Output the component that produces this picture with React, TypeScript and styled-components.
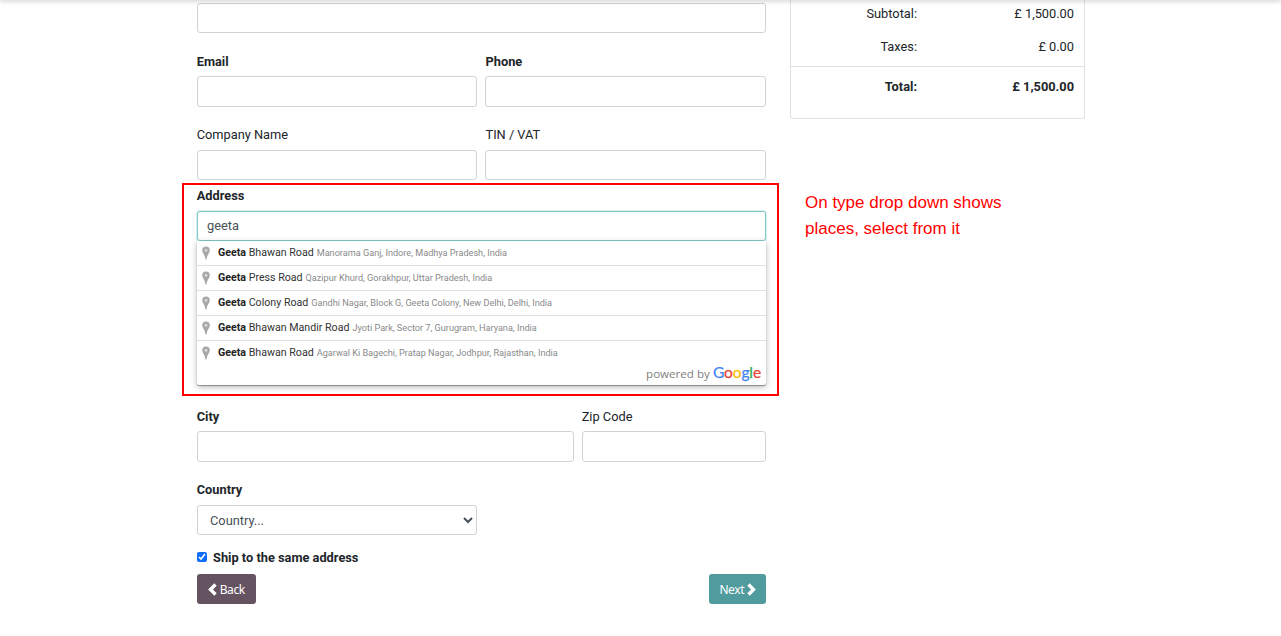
import React from "react";
import styled, { createGlobalStyle } from "styled-components";

const GlobalStyle = createGlobalStyle`
  html, body {
    margin: 0;
    padding: 0;
    background: #fff;
  }
  body {
    font-family: Roboto, "Liberation Sans", sans-serif;
    font-size: 12.8px;
    color: #212529;
    overflow: hidden;
  }
`;

const Page = styled.div`
  position: relative;
  width: 1281px;
  height: 636px;
  overflow: hidden;
  display: flex;
  align-items: flex-start;
  padding-left: 197px;
  box-sizing: border-box;
`;

const TopShadow = styled.div`
  position: absolute;
  top: -4px;
  left: 0;
  right: 0;
  height: 4px;
  box-shadow: 0 1px 5px rgba(0, 0, 0, 0.22);
`;

const Form = styled.div`
  width: 569px;
  padding-top: 3px;
  display: flex;
  flex-direction: column;
`;

const Row = styled.div<{ $columns?: string; $top: number }>`
  display: grid;
  grid-template-columns: ${(p) => p.$columns || "1fr"};
  column-gap: 8px;
  margin-top: ${(p) => p.$top}px;
`;

const Field = styled.div`
  position: relative;
  display: flex;
  flex-direction: column;
`;

const Label = styled.label<{ $bold?: boolean; $low?: boolean; $second?: boolean }>`
  display: block;
  height: 15px;
  line-height: 15px;
  margin-left: ${(p) => (p.$second ? "0.5px" : "-0.3px")};
  padding-top: ${(p) => (p.$low ? 1 : 0)}px;
  margin-bottom: ${(p) => (p.$low ? 7 : 8)}px;
  font-weight: ${(p) => (p.$bold ? 700 : 400)};
  font-size: 12.8px;
`;

const Input = styled.input<{ $height?: number; $focus?: boolean }>`
  box-sizing: border-box;
  width: 100%;
  height: ${(p) => p.$height || 31}px;
  padding: 0 9px ${(p) => (p.$focus ? 2 : 0)}px;
  border: 1px solid ${(p) => (p.$focus ? "#83c7c7" : "#ced4da")};
  border-radius: 3px;
  background: #fff;
  color: #495057;
  font: 400 12.8px Roboto, sans-serif;
  outline: none;
  box-shadow: ${(p) => (p.$focus ? "0 0 0 1px rgba(131,199,199,0.3)" : "none")};
`;

const Select = styled.select`
  box-sizing: border-box;
  width: 280px;
  height: 30px;
  padding: 0 8px;
  border: 1px solid #ced4da;
  border-radius: 3px;
  background: #fff;
  color: #495057;
  font: 400 12.8px Roboto, sans-serif;
`;

const Dropdown = styled.div`
  position: absolute;
  top: 53px;
  left: 0;
  right: 0;
  height: 144px;
  background: #fff;
  border-radius: 0 0 2px 2px;
  box-shadow: 0 1px 1px rgba(0, 0, 0, 0.35), 0 2px 6px rgba(0, 0, 0, 0.28);
  z-index: 2;
`;

const Place = styled.div<{ $first?: boolean }>`
  box-sizing: border-box;
  height: ${(p) => (p.$first ? 24 : 25)}px;
  display: flex;
  align-items: center;
  padding: 0 0 2px 5px;
  border-top: ${(p) => (p.$first ? "0" : "1px solid #e0e0e0")};
  white-space: nowrap;
`;

const Pin = styled.svg`
  width: 8px;
  height: 14px;
  margin: 2px 8px 0 0;
  flex: none;
`;

const Main = styled.span`
  font-size: 10.65px;
  color: #333;
  margin-right: 3px;
`;

const Match = styled.b`
  font-weight: 700;
  color: #222;
`;

const Secondary = styled.span`
  font-size: 9.15px;
  color: #8a8a8a;
  margin-top: 2px;
`;

const PoweredBy = styled.div`
  position: absolute;
  right: 5px;
  bottom: 4px;
  display: flex;
  align-items: baseline;
  gap: 3px;
  font-family: "Open Sans", sans-serif;
  font-size: 11.6px;
  color: #808080;
`;

const GoogleWord = styled.span`
  font-family: Lato, sans-serif;
  font-size: 15.5px;
  font-weight: 400;
  letter-spacing: -0.1px;
  -webkit-text-stroke: 0.25px currentColor;
`;

const Letter = styled.span<{ $color: string }>`
  color: ${(p) => p.$color};
`;

const CheckRow = styled.label`
  display: flex;
  align-items: center;
  height: 16px;
  margin-top: 14px;
  font-weight: 700;
  font-size: 12.8px;
`;

const Check = styled.input`
  width: 10px;
  height: 10px;
  margin: 0 6px 0 0;
  accent-color: #0d6efd;
`;

const Actions = styled.div`
  display: flex;
  justify-content: space-between;
  margin-top: 9px;
`;

const Button = styled.button<{ $color: string; $width: number }>`
  width: ${(p) => p.$width}px;
  height: 30px;
  padding: 0;
  display: inline-flex;
  align-items: center;
  justify-content: center;
  gap: 2.5px;
  border: 0;
  border-radius: 3px;
  background: ${(p) => p.$color};
  color: #fff;
  font: 400 12px "Noto Sans", sans-serif;
  letter-spacing: -0.4px;
`;

const Chevron = styled.svg`
  width: 9px;
  height: 13px;
  fill: #fff;
  flex: none;
`;

const SummaryCard = styled.div`
  box-sizing: border-box;
  width: 295px;
  height: 119px;
  margin-left: 24px;
  border: 1px solid #dee2e6;
  border-top: 0;
  border-radius: 0 0 3px 3px;
`;

const SummaryRow = styled.div<{ $height: number; $total?: boolean }>`
  display: grid;
  grid-template-columns: 126px 157px;
  height: ${(p) => p.$height}px;
  align-items: center;
  text-align: right;
  font-weight: ${(p) => (p.$total ? 700 : 400)};
  border-top: ${(p) => (p.$total ? "1px solid #dee2e6" : "0")};
  box-sizing: border-box;
`;

const Highlight = styled.div`
  position: absolute;
  left: 182px;
  top: 183px;
  width: 597px;
  height: 213px;
  box-sizing: border-box;
  border: 2px solid #f00;
  z-index: 3;
  pointer-events: none;
`;

const Note = styled.div`
  position: absolute;
  left: 805px;
  top: 190px;
  width: 230px;
  font: 400 17px/26px "Liberation Sans", sans-serif;
  color: #f00;
`;

const places = [
  { name: "Bhawan Road", area: "Manorama Ganj, Indore, Madhya Pradesh, India" },
  { name: "Press Road", area: "Qazipur Khurd, Gorakhpur, Uttar Pradesh, India" },
  { name: "Colony Road", area: "Gandhi Nagar, Block G, Geeta Colony, New Delhi, Delhi, India" },
  { name: "Bhawan Mandir Road", area: "Jyoti Park, Sector 7, Gurugram, Haryana, India" },
  { name: "Bhawan Road", area: "Agarwal Ki Bagechi, Pratap Nagar, Jodhpur, Rajasthan, India" },
];

const googleLetters = [
  ["G", "#4285f4"],
  ["o", "#ea4335"],
  ["o", "#fbbc05"],
  ["g", "#4285f4"],
  ["l", "#34a853"],
  ["e", "#ea4335"],
];

const App = () => {
  return (
    <>
      <GlobalStyle />
      <Page>
        <TopShadow />
        <Form>
          <Input $height={30} />
          <Row $columns="280px 281px" $top={20}>
            <Field>
              <Label $bold $low>Email</Label>
              <Input />
            </Field>
            <Field>
              <Label $bold $low $second>Phone</Label>
              <Input />
            </Field>
          </Row>
          <Row $columns="280px 281px" $top={20}>
            <Field>
              <Label>Company Name</Label>
              <Input $height={30} />
            </Field>
            <Field>
              <Label $second>TIN / VAT</Label>
              <Input $height={30} />
            </Field>
          </Row>
          <Row $top={8}>
            <Field>
              <Label $bold>Address</Label>
              <Input $height={30} $focus defaultValue="geeta" />
              <Dropdown>
                {places.map((place, index) => (
                  <Place key={index} $first={index === 0}>
                    <Pin viewBox="0 0 8 14">
                      <path
                        d="M4 0.5a3.8 3.8 0 0 1 3.8 3.8c0 2.6-2.6 4.4-3.3 9.2h-1c-.7-4.8-3.3-6.6-3.3-9.2a3.8 3.8 0 0 1 3.8-3.8z"
                        fill="#a8a8a8"
                      />
                      <circle cx="4" cy="4.3" r="1.4" fill="#dcdcdc" />
                    </Pin>
                    <Main>
                      <Match>Geeta</Match> {place.name}
                    </Main>
                    <Secondary>{place.area}</Secondary>
                  </Place>
                ))}
                <PoweredBy>
                  powered by
                  <GoogleWord>
                    {googleLetters.map(([letter, color], index) => (
                      <Letter key={index} $color={color}>
                        {letter}
                      </Letter>
                    ))}
                  </GoogleWord>
                </PoweredBy>
              </Dropdown>
            </Field>
          </Row>
          <Row $columns="377px 184px" $top={167}>
            <Field>
              <Label $bold $low>City</Label>
              <Input />
            </Field>
            <Field>
              <Label $low>Zip Code</Label>
              <Input />
            </Field>
          </Row>
          <Row $top={20}>
            <Field>
              <Label $bold>Country</Label>
              <Select defaultValue="">
                <option value="">Country...</option>
              </Select>
            </Field>
          </Row>
          <CheckRow>
            <Check type="checkbox" defaultChecked />
            Ship to the same address
          </CheckRow>
          <Actions>
            <Button $color="#665362" $width={59}>
              <Chevron viewBox="0 0 9 13">
                <path d="M6.3 0.3 8.7 2.7 4.9 6.5 8.7 10.3 6.3 12.7 0.1 6.5z" />
              </Chevron>
              Back
            </Button>
            <Button $color="#4f9b9d" $width={57}>
              Next
              <Chevron viewBox="0 0 9 13">
                <path d="M2.7 0.3 0.3 2.7 4.1 6.5 0.3 10.3 2.7 12.7 8.9 6.5z" />
              </Chevron>
            </Button>
          </Actions>
        </Form>
        <SummaryCard>
          <SummaryRow $height={27}>
            <span>Subtotal:</span>
            <span>£ 1,500.00</span>
          </SummaryRow>
          <SummaryRow $height={39}>
            <span>Taxes:</span>
            <span>£ 0.00</span>
          </SummaryRow>
          <SummaryRow $height={40} $total>
            <span>Total:</span>
            <span>£ 1,500.00</span>
          </SummaryRow>
        </SummaryCard>
        <Highlight />
        <Note>
          On type drop down shows
          <br />
          places, select from it
        </Note>
      </Page>
    </>
  );
};

export default App;
